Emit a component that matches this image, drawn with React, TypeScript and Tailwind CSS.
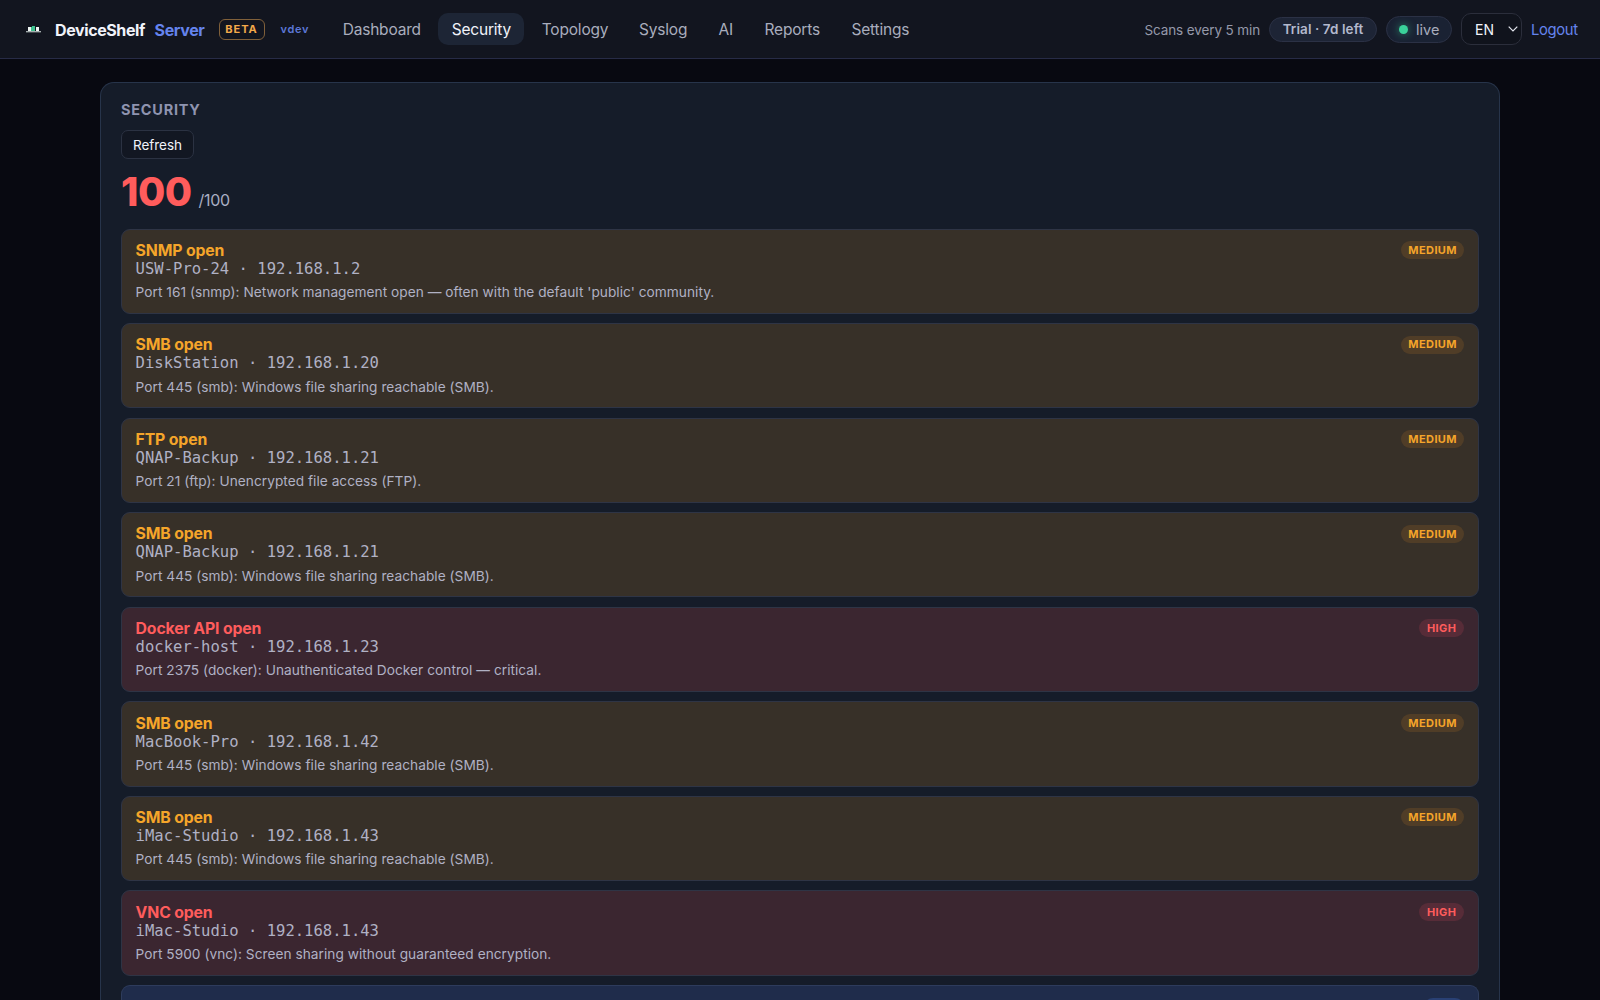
type Severity = "medium" | "high" | "low";

interface Finding {
  title: string;
  host: string;
  ip: string;
  detail: string;
  severity: Severity;
}

const smb = "Port 445 (smb): Windows file sharing reachable (SMB).";

const findings: Finding[] = [
  { title: "SNMP open", host: "USW-Pro-24", ip: "192.168.1.2", detail: "Port 161 (snmp): Network management open — often with the default 'public' community.", severity: "medium" },
  { title: "SMB open", host: "DiskStation", ip: "192.168.1.20", detail: smb, severity: "medium" },
  { title: "FTP open", host: "QNAP-Backup", ip: "192.168.1.21", detail: "Port 21 (ftp): Unencrypted file access (FTP).", severity: "medium" },
  { title: "SMB open", host: "QNAP-Backup", ip: "192.168.1.21", detail: smb, severity: "medium" },
  { title: "Docker API open", host: "docker-host", ip: "192.168.1.23", detail: "Port 2375 (docker): Unauthenticated Docker control — critical.", severity: "high" },
  { title: "SMB open", host: "MacBook-Pro", ip: "192.168.1.42", detail: smb, severity: "medium" },
  { title: "SMB open", host: "iMac-Studio", ip: "192.168.1.43", detail: smb, severity: "medium" },
  { title: "VNC open", host: "iMac-Studio", ip: "192.168.1.43", detail: "Port 5900 (vnc): Screen sharing without guaranteed encryption.", severity: "high" },
];

const cardTone: Record<Severity, string> = {
  medium: "bg-[#373028]",
  high: "bg-[#3b2630]",
  low: "bg-[#1f2c4b]",
};
const titleTone: Record<Severity, string> = {
  medium: "text-[#f5a52a]",
  high: "text-[#ff5c5c]",
  low: "text-[#6c8cff]",
};
const badgeTone: Record<Severity, string> = {
  medium: "w-[63.5px] bg-[#503d27] text-[#f5a52a]",
  high: "w-[45.5px] bg-[#572c38] text-[#ff5c5c]",
  low: "w-[40px] bg-[#294074] text-[#6c8cff]",
};

const tabs = [
  { label: "Dashboard", width: "w-[104.5px]" },
  { label: "Security", width: "w-[86px]" },
  { label: "Topology", width: "w-[92.5px]" },
  { label: "Syslog", width: "w-[75px]" },
  { label: "AI", width: "w-[41.5px]" },
  { label: "Reports", width: "w-[82.5px]" },
  { label: "Settings", width: "w-[85px]" },
];

function Logo() {
  return (
    <svg className="h-5 w-5 shrink-0" viewBox="0 0 20 20" shapeRendering="crispEdges">
      <rect x="4" y="8" width="3" height="4" fill="#eef4f2" />
      <rect x="8" y="7" width="3" height="5" fill="#3fc08e" />
      <rect x="7" y="8" width="1" height="4" fill="#3fc08e" />
      <rect x="12" y="8" width="3" height="4" fill="#eef4f2" />
      <rect x="2" y="12" width="15" height="1" fill="#a4adae" />
      <rect x="2" y="13" width="15" height="1" fill="#474d52" />
    </svg>
  );
}

function Header() {
  return (
    <header className="flex h-[59px] shrink-0 items-center border-b border-[#272b46] bg-[#12151f] pr-[22px] pl-[24px] whitespace-nowrap">
      <Logo />
      <span className="ml-[11px] w-[99.5px] pt-px text-[16px] font-bold tracking-[-0.4px] text-[#f1f3fa]">DeviceShelf</span>
      <span className="w-[64px] pt-px text-[16px] font-bold tracking-[-0.35px] text-[#6584ee]">Server</span>
      <span className="flex h-[21px] w-[46px] items-center justify-center rounded-[6px] border border-[#80603a] pt-px text-[11px] font-bold tracking-[1px] text-[#f3a94a]">BETA</span>
      <span className="ml-[16px] w-[49px] pt-px text-[11px] font-semibold tracking-[0.7px] text-[#5d78d8]">vdev</span>
      <nav className="flex items-center gap-[4.4px]">
        {tabs.map((t) => (
          <a
            key={t.label}
            className={`flex h-[32px] items-center justify-center rounded-[10px] pt-[2px] text-[15.5px] tracking-[-0.2px] ${t.width} ${
              t.label === "Security" ? "bg-[#1d2535] text-[#f1f3fa]" : "text-[#a9adbd]"
            }`}
          >
            {t.label}
          </a>
        ))}
      </nav>
      <div className="ml-auto flex items-center">
        <span className="mr-[9px] pt-[2px] text-[13.5px] tracking-[-0.12px] text-[#9599aa]">Scans every 5 min</span>
        <span className="mr-[9px] flex h-[25px] w-[108px] items-center justify-center rounded-full border border-[#2b3145] bg-[#1d2435] pt-px text-[13.5px] font-semibold tracking-[0.08px] text-[#b3b9cd]">Trial · 7d left</span>
        <span className="mr-[9px] flex h-[27px] w-[66px] items-center rounded-full border border-[#2b3145] bg-[#1a2233] pl-[12px] text-[14.5px] text-[#a9adbd]">
          <span className="mr-[8px] h-[9px] w-[9px] rounded-full bg-[#3ad29a] shadow-[0_0_8px_#3ad29a99]" />
          <span className="pt-[2px]">live</span>
        </span>
        <span className="mr-[9px] flex h-[32px] w-[61px] items-center rounded-[10px] border border-[#2b2e3b] bg-[#10131c] pl-[13px] text-[14px] text-[#f1f3fa]">
          EN
          <svg className="ml-[13px] h-[10px] w-[12px]" viewBox="0 0 12 10" fill="none" stroke="#e4e6ee" strokeWidth="1.2">
            <path d="M1.7 2.7 6 7l4.3-4.3" />
          </svg>
        </span>
        <a className="w-[47px] pt-[2px] text-[14.8px] tracking-[-0.35px] text-[#6584ee]">Logout</a>
      </div>
    </header>
  );
}

function FindingCard({ f }: { f: Finding }) {
  return (
    <article className={`flex h-[85.2px] shrink-0 items-start justify-between rounded-[9px] border border-[#2e3445] px-[13.6px] pt-[11.6px] whitespace-nowrap ${cardTone[f.severity]}`}>
      <div>
        <h3 className={`pt-[0.6px] text-[15.8px] leading-[18px] font-bold tracking-[-0.15px] ${titleTone[f.severity]}`}>{f.title}</h3>
        <p className="font-['DejaVu_Sans_Mono',monospace] text-[15.55px] leading-[18px] text-[#b0b1c4]">
          {f.host} · {f.ip}
        </p>
        <p className="mt-[5.4px] text-[13.7px] leading-[18px] tracking-[0.03px] text-[#b0b1c4]">{f.detail}</p>
      </div>
      <span className={`flex h-[18px] items-center justify-center rounded-full text-[11px] font-bold tracking-[0.4px] ${badgeTone[f.severity]}`}>
        {f.severity.toUpperCase()}
      </span>
    </article>
  );
}

export default function App() {
  return (
    <div className="flex h-[1000px] w-[1600px] flex-col overflow-hidden bg-[#080911] font-['Inter',sans-serif]">
      <Header />
      <main className="mx-auto mt-[23px] w-[1400px] rounded-t-[14px] border border-b-0 border-[#27344a] bg-[#151c29] px-[20px]">
        <h2 className="mt-[17px] text-[14.5px] leading-[20px] font-bold tracking-[0.75px] text-[#8f94b0]">SECURITY</h2>
        <button className="mt-[10.4px] flex h-[29px] w-[73px] items-center justify-center rounded-[7px] border border-[#2b3242] bg-[#121722] pt-px text-[13.5px] text-[#f1f3fa]">Refresh</button>
        <div className="mt-[7.6px] flex h-[50px] items-baseline gap-[7px]">
          <span className="text-[39.5px] leading-[50px] font-extrabold tracking-[-0.5px] text-[#ff5c5c]">100</span>
          <span className="text-[16px] tracking-[-0.3px] text-[#a9aec2]">/100</span>
        </div>
        <section className="mt-[11.6px] flex flex-col gap-[9.36px]">
          {findings.map((f, i) => (
            <FindingCard key={i} f={f} />
          ))}
          <article className="flex h-[15px] items-start justify-end overflow-hidden rounded-t-[9px] border border-b-0 border-[#2e3c5c] bg-[#1f2c4b] px-[13.6px] pt-[12px]">
            <span className="h-[18px] w-[40px] shrink-0 rounded-full bg-[#294074]" />
          </article>
        </section>
      </main>
    </div>
  );
}
